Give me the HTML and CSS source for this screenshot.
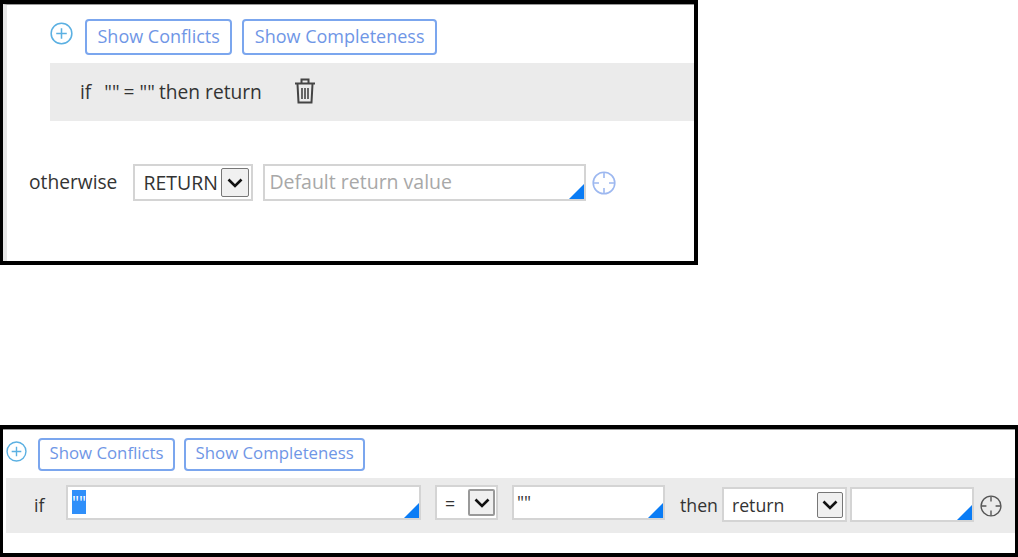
FILE: index.html
```html
<!DOCTYPE html>
<html lang="en">
<head>
    <meta charset="UTF-8">
    <meta name="viewport" content="width=device-width, initial-scale=1.0">
    <title>Decision table</title>
    <link rel="stylesheet" href="styles.css">
</head>
<body>
    <div class="panel panel-large">
        <div class="panel-inner">
            <div class="toolbar">
                <svg class="icon-add" viewBox="0 0 24 24">
                    <circle cx="12" cy="12" r="10.8"/>
                    <path d="M12 6.5v11M6.5 12h11"/>
                </svg>
                <button class="btn" type="button">Show Conflicts</button>
                <button class="btn" type="button">Show Completeness</button>
            </div>

            <div class="rule-summary">
                <span class="word-if">if</span>
                <span class="word-cond">""</span>
                <span class="word-eq">=</span>
                <span class="word-val">""</span>
                <span class="word-then">then</span>
                <span class="word-return">return</span>
                <svg class="icon-trash" viewBox="0 0 22 26">
                    <path class="trash-outline" d="M1 5.5h20M7.5 5V1.5h7V5M3.5 6l1 18.5h13l1-18.5"/>
                    <path class="trash-bars" d="M8 10v11M11 10v11M14 10v11"/>
                </svg>
            </div>

            <div class="otherwise">
                <span class="otherwise-label">otherwise</span>
                <div class="select select-return">
                    <span>RETURN</span>
                    <span class="select-arrow">
                        <svg viewBox="0 0 16 10"><path d="M1.5 1.5 8 8l6.5-6.5"/></svg>
                    </span>
                </div>
                <div class="field field-default">
                    <span class="placeholder">Default return value</span>
                </div>
                <svg class="icon-target icon-target-blue" viewBox="0 0 24 24">
                    <circle cx="12" cy="12" r="10.8"/>
                    <path d="M12 1.5v5.5M12 17v5.5M1.5 12H7M17 12h5.5"/>
                </svg>
            </div>
        </div>
    </div>

    <div class="panel panel-wide">
        <div class="panel-inner">
            <div class="toolbar">
                <svg class="icon-add" viewBox="0 0 24 24">
                    <circle cx="12" cy="12" r="10.8"/>
                    <path d="M12 6.5v11M6.5 12h11"/>
                </svg>
                <button class="btn" type="button">Show Conflicts</button>
                <button class="btn" type="button">Show Completeness</button>
            </div>

            <div class="rule-edit">
                <span class="edit-if">if</span>
                <div class="field field-left"><span class="selected">""</span></div>
                <div class="select select-op">
                    <span>=</span>
                    <span class="select-arrow">
                        <svg viewBox="0 0 16 10"><path d="M1.5 1.5 8 8l6.5-6.5"/></svg>
                    </span>
                </div>
                <div class="field field-right"><span class="field-value">""</span></div>
                <span class="edit-then">then</span>
                <div class="select select-action">
                    <span>return</span>
                    <span class="select-arrow">
                        <svg viewBox="0 0 16 10"><path d="M1.5 1.5 8 8l6.5-6.5"/></svg>
                    </span>
                </div>
                <div class="field field-result"></div>
                <svg class="icon-target icon-target-dark" viewBox="0 0 24 24">
                    <circle cx="12" cy="12" r="10.8"/>
                    <path d="M12 1.5v5.5M12 17v5.5M1.5 12H7M17 12h5.5"/>
                </svg>
            </div>
        </div>
    </div>
</body>
</html>
```

FILE: styles.css
```css
* {
    box-sizing: border-box;
}

body {
    margin: 0;
    background-color: #fff;
    font-family: "Open Sans", sans-serif;
    color: #333;
}

.panel {
    border: 4px solid #000;
    border-left-width: 3px;
}

.panel-large {
    width: 698px;
    height: 265px;
}

.panel-wide {
    width: 1018px;
    height: 132px;
    margin-top: 160px;
    border-right-width: 3px;
}

.panel-inner {
    height: 100%;
    border-top: 1px solid #999;
}

.panel-large .panel-inner {
    border-left: 4px solid #e6e6e6;
}

/* toolbar */
.toolbar {
    display: flex;
    align-items: flex-start;
}

.panel-large .toolbar {
    padding: 14px 0 0 43px;
}

.panel-wide .toolbar {
    padding: 8px 0 0 3px;
}

.btn {
    display: block;
    border: 2px solid #7ba6ee;
    border-radius: 4px;
    background-color: #fff;
    color: #6f96e6;
    font-family: "Open Sans", sans-serif;
    white-space: nowrap;
}

.panel-large .btn {
    height: 36px;
    padding: 0 10.5px 2px;
    font-size: 18px;
    margin-right: 10px;
}

.panel-wide .btn {
    height: 33px;
    padding: 0 9.5px 4px;
    font-size: 16.8px;
    margin-right: 9px;
}

.icon-add {
    flex: none;
    fill: none;
    stroke: #5bb0e2;
    stroke-width: 1.6;
}

.panel-large .icon-add {
    width: 23px;
    height: 23px;
    margin: 3px 12px 0 0;
}

.panel-wide .icon-add {
    width: 21px;
    height: 21px;
    margin: 3px 11px 0 0;
}

/* rule row, read only */
.rule-summary {
    display: flex;
    align-items: center;
    height: 58px;
    margin: 8px 0 0 43px;
    padding: 0 0 2px 30px;
    background-color: #ebebeb;
    font-size: 19.2px;
}

.word-if {
    margin-right: 13px;
}

.word-cond {
    margin-right: 4px;
}

.word-eq {
    margin-right: 5px;
}

.word-val {
    margin-right: 4px;
}

.word-then {
    margin-right: 5px;
}

.icon-trash {
    width: 22px;
    height: 26px;
    margin-left: 32px;
    fill: none;
    stroke: #444;
}

.trash-outline {
    stroke-width: 2;
}

.trash-bars {
    stroke-width: 1.6;
}

/* otherwise row */
.otherwise {
    display: flex;
    align-items: center;
    margin-top: 43px;
    padding-left: 22px;
    font-size: 19.5px;
}

.otherwise > * {
    line-height: 1.2;
}

.otherwise-label {
    margin: -2px 16px 0 0;
    font-size: 19.2px;
}

.select,
.field {
    position: relative;
    display: flex;
    align-items: center;
    flex: none;
    border: 2px solid #d4d4d4;
    background-color: #fff;
}

.select {
    justify-content: space-between;
    padding: 0 2px 0 8px;
}

.select-arrow {
    display: flex;
    align-items: center;
    justify-content: center;
    flex: none;
    width: 28px;
    height: 29px;
    border: 1px solid #777;
    border-radius: 2px;
    background-color: #f0f0f0;
}

.select-arrow svg {
    width: 16px;
    height: 10px;
    fill: none;
    stroke: #111;
    stroke-width: 2.6;
}

/* blue corner of a smart field */
.field::after {
    content: "";
    position: absolute;
    right: 0;
    bottom: 0;
    border-style: solid;
    border-width: 0 0 15px 15px;
    border-color: transparent transparent #0a7cf5 transparent;
}

.select-return {
    width: 120px;
    height: 37px;
    margin-right: 10px;
}

.field-default {
    width: 323px;
    height: 37px;
    padding: 0 0 2px 4px;
}

.placeholder {
    color: #a8a8a8;
}

.icon-target {
    flex: none;
    fill: none;
}

.icon-target-blue {
    width: 24px;
    height: 24px;
    margin-left: 6px;
    stroke: #9db8f0;
    stroke-width: 1.6;
}

.icon-target-dark {
    width: 22px;
    height: 22px;
    margin: 2px 0 0 6px;
    stroke: #555;
    stroke-width: 1.5;
}

/* rule row, editing */
.rule-edit {
    display: flex;
    align-items: center;
    height: 55px;
    margin: 7px 0 0 3px;
    padding: 0 0 2px 28px;
    background-color: #ebebeb;
    font-size: 17.7px;
}

.edit-if {
    width: 32px;
    flex: none;
}

.field-left {
    width: 355px;
    height: 35px;
    margin: -4px 14px 0 0;
    padding: 3px;
    align-items: flex-start;
}

.selected {
    height: 24px;
    margin-left: 1px;
    background-color: #2f8ffa;
    color: #fff;
    line-height: 24px;
}

.select-op {
    width: 63px;
    height: 35px;
    margin: -4px 14px 0 0;
    padding-right: 1px;
}

.select-op .select-arrow {
    width: 27px;
    height: 27px;
    border: 2px solid #999;
}

.field-right {
    width: 153px;
    height: 35px;
    margin: -4px 15px 0 0;
    padding: 3px 3px;
    align-items: flex-start;
}

.field-value {
    line-height: 24px;
}

.edit-then {
    margin: 0 4px 0 0;
}

.select-action {
    width: 125px;
    height: 35px;
    margin-right: 3px;
}

.select-action .select-arrow {
    width: 26px;
    height: 26px;
}

.field-result {
    width: 124px;
    height: 35px;
}
```
